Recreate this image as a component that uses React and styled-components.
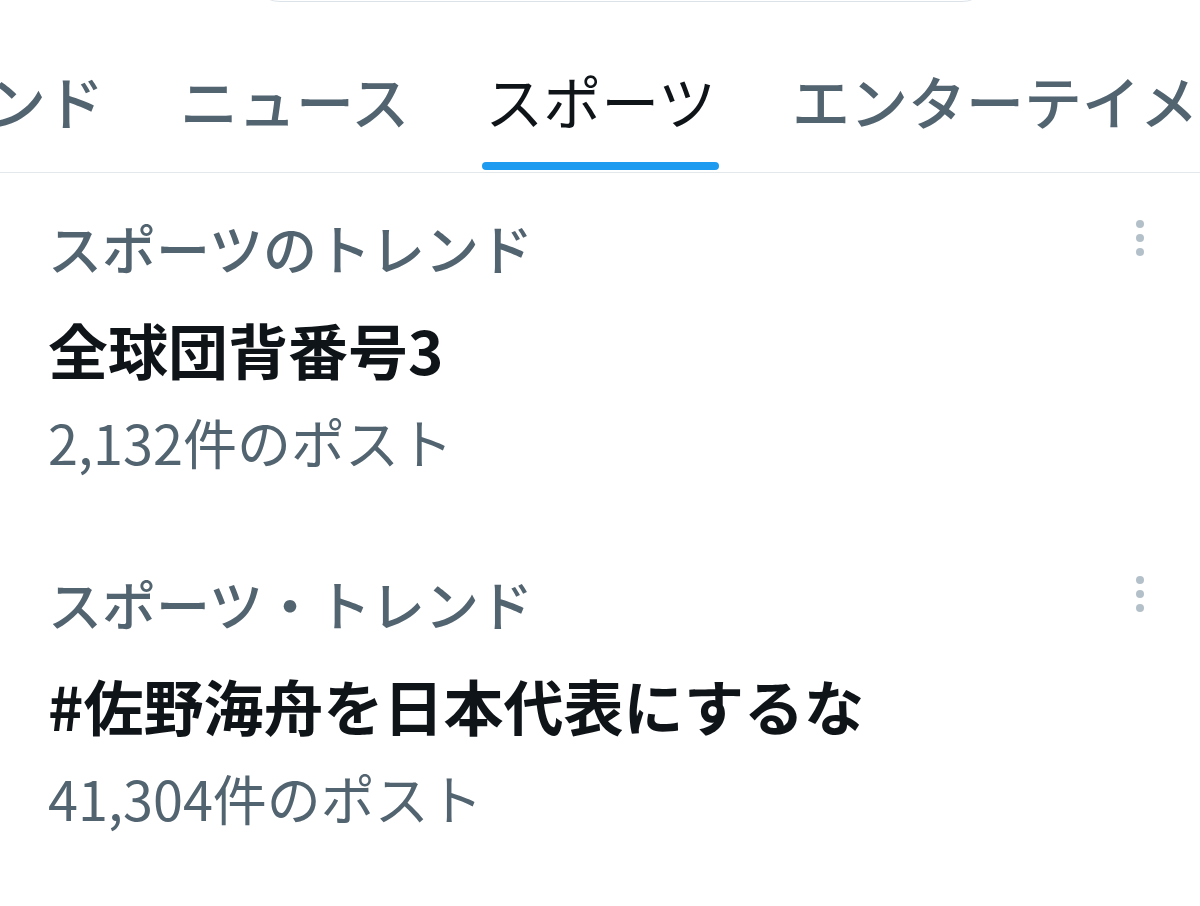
import React from "react";
import styled, { createGlobalStyle } from "styled-components";

const GlobalStyle = createGlobalStyle`
  html, body {
    margin: 0;
    padding: 0;
    background: #ffffff;
    overflow: hidden;
  }
  body {
    font-family: "Noto Sans CJK JP", "Noto Sans", sans-serif;
    color: #0f1419;
  }
`;

const Page = styled.div`
  width: 1200px;
  height: 906px;
  overflow: hidden;
  background: #ffffff;
`;

const SearchRow = styled.div`
  display: flex;
  padding-left: 250px;
  margin-top: -58px;
  margin-bottom: 58px;
`;

const SearchBox = styled.div`
  width: 740px;
  height: 58px;
  border: 1.5px solid #dce3e8;
  border-radius: 30px;
  background: #ffffff;
`;

const TabBar = styled.nav`
  display: flex;
  overflow: hidden;
  border-bottom: 1.5px solid #e3e8eb;
`;

const TabList = styled.div`
  display: flex;
  flex-shrink: 0;
  margin-left: ${(p) => -p.$offset}px;
`;

const Tab = styled.div`
  flex-shrink: 0;
  padding: 0 38px;
  display: flex;
  flex-direction: column;
  align-items: center;
`;

const TabLabel = styled.span`
  font-size: 58px;
  line-height: 80px;
  white-space: nowrap;
  font-weight: ${(p) => (p.$active ? 400 : 500)};
  color: ${(p) => (p.$active ? "#0f1419" : "#536471")};
`;

const Underline = styled.div`
  align-self: stretch;
  margin: 22px -3px 2px;
  height: 8px;
  border-radius: 4px;
  background: ${(p) => (p.$active ? "#1d9bf0" : "transparent")};
`;

const TrendRow = styled.div`
  display: flex;
  align-items: flex-start;
  padding: 35px 50px 47px 48px;
`;

const TrendBody = styled.div`
  flex: 1;
  display: flex;
  flex-direction: column;
`;

const Category = styled.div`
  font-size: 54px;
  line-height: 80px;
  font-weight: 500;
  color: #536471;
  white-space: nowrap;
`;

const Title = styled.div`
  margin-top: 21px;
  font-size: 60px;
  line-height: 80px;
  font-weight: 700;
  color: #0f1419;
  white-space: nowrap;
`;

const Count = styled.div`
  margin-top: 13px;
  font-size: 54px;
  line-height: 80px;
  color: #536471;
  white-space: nowrap;
`;

const MoreButton = styled.div`
  width: 20px;
  margin-top: 12px;
  display: flex;
  justify-content: center;
`;

const MoreIcon = () => (
  <svg width="20" height="38" viewBox="0 0 20 38">
    <circle cx="10" cy="4" r="4" fill="#b3c0c9" />
    <circle cx="10" cy="18" r="4" fill="#b3c0c9" />
    <circle cx="10" cy="32" r="4" fill="#b3c0c9" />
  </svg>
);

const tabs = ["おすすめ", "トレンド", "ニュース", "スポーツ", "エンターテイメント"];

const trends = [
  { category: "スポーツのトレンド", title: "全球団背番号3", count: "2,132件のポスト" },
  { category: "スポーツ・トレンド", title: "#佐野海舟を日本代表にするな", count: "41,304件のポスト" },
];

const App = () => {
  const active = "スポーツ";
  return (
    <>
      <GlobalStyle />
      <Page>
        <SearchRow>
          <SearchBox />
        </SearchRow>
        <TabBar>
          <TabList $offset={474}>
            {tabs.map((t) => (
              <Tab key={t}>
                <TabLabel $active={t === active}>{t}</TabLabel>
                <Underline $active={t === active} />
              </Tab>
            ))}
          </TabList>
        </TabBar>
        {trends.map((tr) => (
          <TrendRow key={tr.title}>
            <TrendBody>
              <Category>{tr.category}</Category>
              <Title>{tr.title}</Title>
              <Count>{tr.count}</Count>
            </TrendBody>
            <MoreButton>
              <MoreIcon />
            </MoreButton>
          </TrendRow>
        ))}
      </Page>
    </>
  );
};

export default App;
